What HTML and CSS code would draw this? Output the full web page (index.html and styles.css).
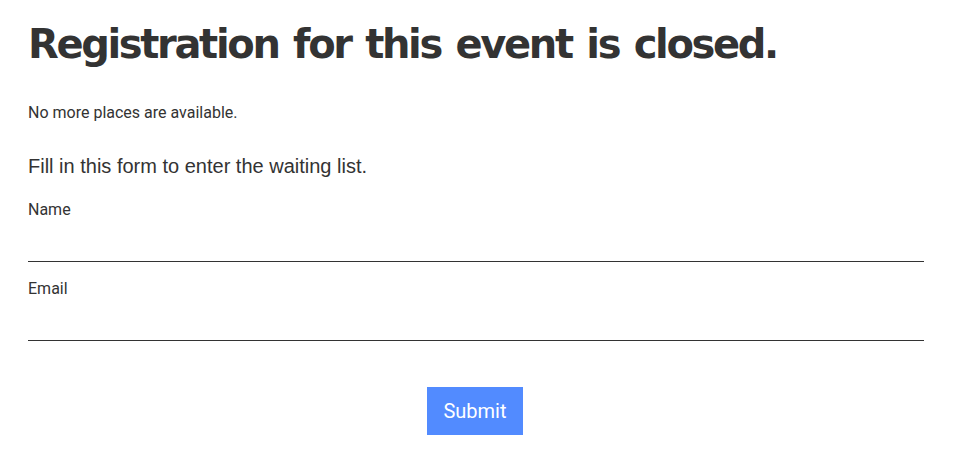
FILE: index.html
```html
<!DOCTYPE html>
<html lang="en">
<head>
<meta charset="utf-8">
<title>Registration closed</title>
<link rel="stylesheet" href="styles.css">
</head>
<body>
<main class="page">
  <h1 class="title">Registration for this event is closed.</h1>
  <p class="note">No more places are available.</p>
  <p class="lead">Fill in this form to enter the waiting list.</p>
  <form class="form">
    <label class="field">
      <span class="field-label">Name</span>
      <input class="field-input" type="text">
    </label>
    <label class="field">
      <span class="field-label">Email</span>
      <input class="field-input" type="email">
    </label>
    <div class="actions">
      <button class="submit" type="button">Submit</button>
    </div>
  </form>
</main>
</body>
</html>
```
FILE: styles.css
```css
html, body {
  margin: 0;
  padding: 0;
  background: #fff;
}
body {
  color: #333;
  font-family: Roboto, "Liberation Sans", sans-serif;
}
.page {
  padding: 14px 38px 0 28px;
}
.title {
  margin: 0;
  font-family: "DejaVu Sans", sans-serif;
  font-weight: bold;
  font-size: 40px;
  line-height: 60px;
  letter-spacing: -2.35px;
  word-spacing: 3px;
  color: #333;
}
.note {
  margin: 28px 0 0;
  font-size: 16px;
  line-height: 22px;
}
.lead {
  margin: 30px 0 0;
  font-family: "Liberation Sans", Arial, sans-serif;
  font-size: 20px;
  line-height: 24px;
}
.form {
  margin-top: 20px;
  display: flex;
  flex-direction: column;
}
.field {
  display: flex;
  flex-direction: column;
  margin-bottom: 15px;
}
.field-label {
  font-size: 16px;
  line-height: 24px;
}
.field-input {
  box-sizing: border-box;
  border: 0;
  border-bottom: 1px solid #333;
  height: 40px;
  padding: 0;
  outline: none;
  font: inherit;
  background: transparent;
}
.actions {
  display: flex;
  justify-content: center;
  margin-top: 31px;
  padding-right: 2px;
}
.submit {
  width: 96px;
  height: 48px;
  border: 0;
  background: #528bff;
  color: #fff;
  font-family: Roboto, sans-serif;
  font-size: 20px;
  padding: 0;
}
```
